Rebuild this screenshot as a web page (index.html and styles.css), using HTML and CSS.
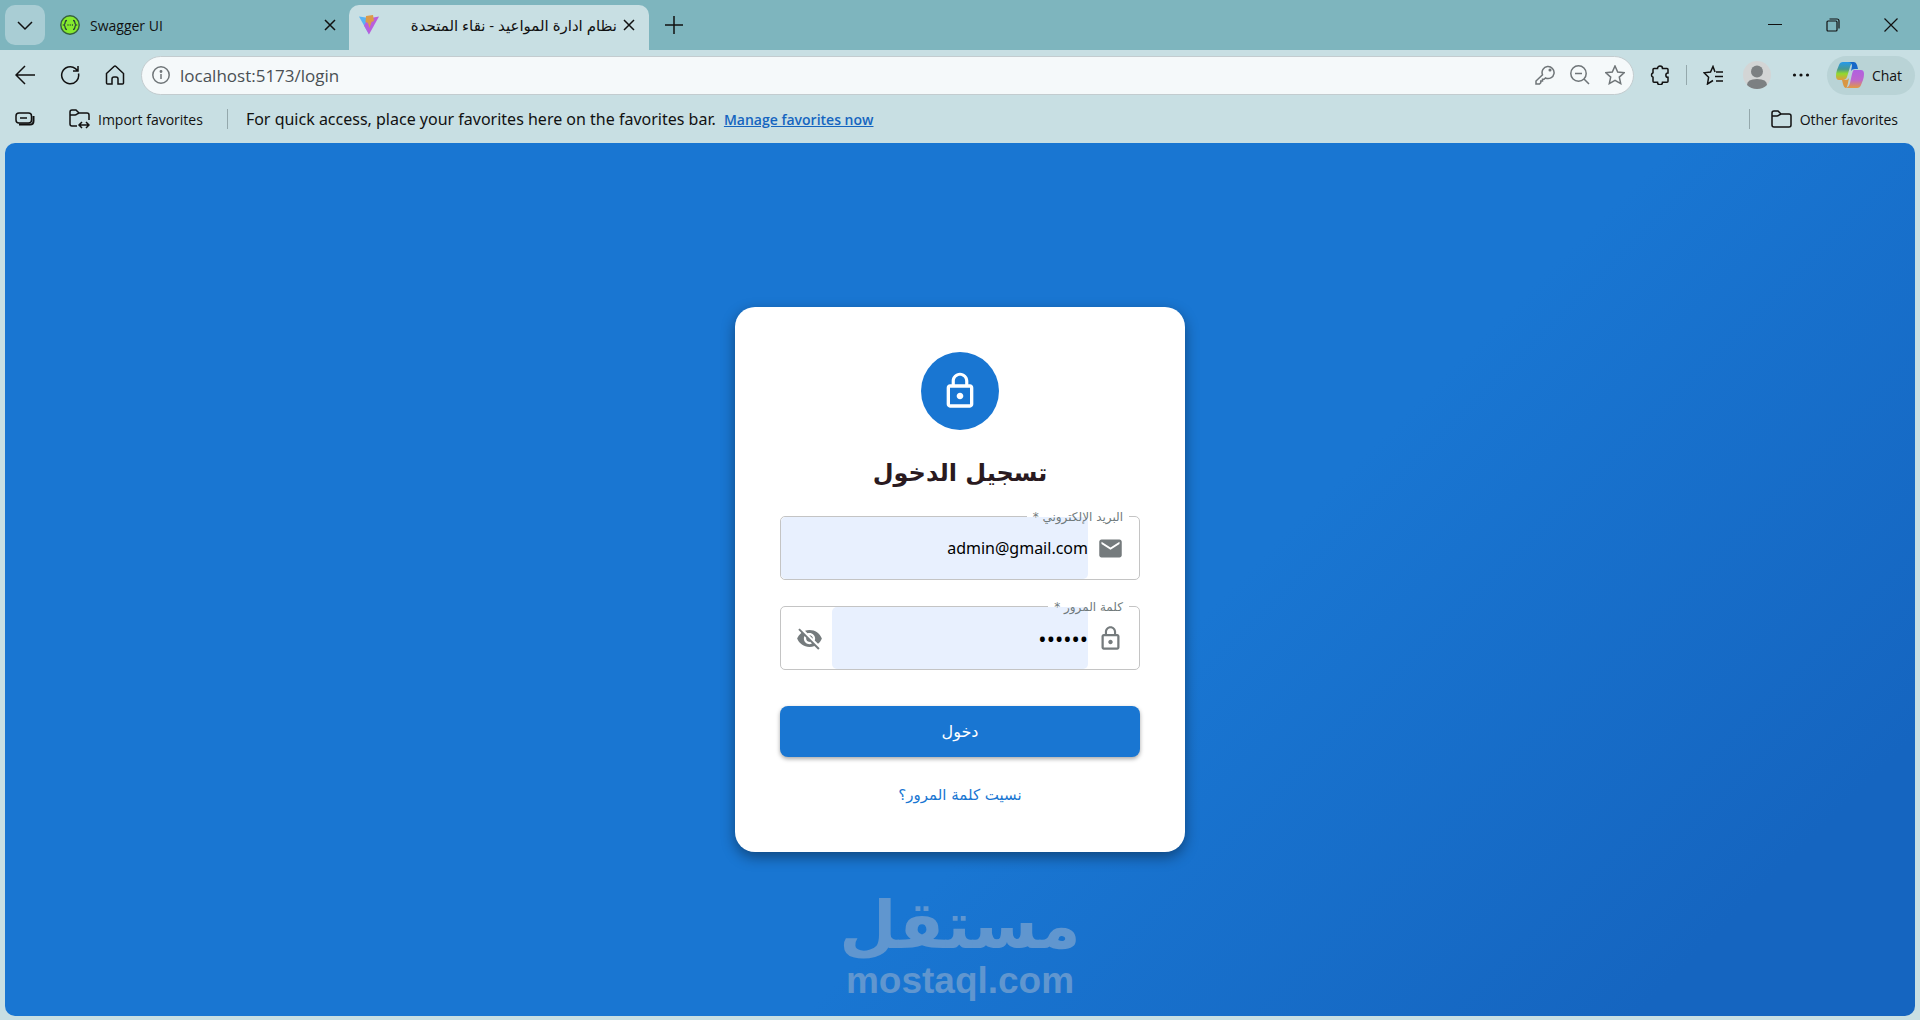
FILE: index.html
```html
<!DOCTYPE html>
<html lang="en">
<head>
  <meta charset="UTF-8" />
  <meta name="viewport" content="width=device-width, initial-scale=1.0"/>
  <title>نظام ادارة المواعيد - نقاء المتحدة</title>
  <link rel="stylesheet" href="styles.css">
</head>
<body>

<header>
  <div class="tab-strip">
    <button type="button" class="tab-menu" aria-label="Tab actions">
      <svg width="16" height="16" viewBox="0 0 16 16"><path d="M1 5l7 7 7-7"/></svg>
    </button>
    <div class="tab">
      <svg class="favicon" width="20" height="20" viewBox="0 0 20 20">
        <circle cx="10" cy="10" r="9.2" fill="#85ea2d" stroke="#35613c" stroke-width="1.4"/>
        <path d="M7 5.5c-1.5 0-1.8.6-1.8 1.8 0 1.5-.2 2.2-1.4 2.7 1.2.5 1.4 1.2 1.4 2.7 0 1.2.3 1.8 1.8 1.8M13 5.5c1.5 0 1.8.6 1.8 1.8 0 1.5.2 2.2 1.4 2.7-1.2.5-1.4 1.2-1.4 2.7 0 1.2-.3 1.8-1.8 1.8" stroke="#28423a" stroke-width="1.3"/>
        <path d="M7.5 10h1M9.7 10h1M11.9 10h1" stroke="#28423a"/>
      </svg>
      <span class="tab-title">Swagger UI</span>
      <button type="button" aria-label="Close tab"><svg width="12" height="12" viewBox="0 0 12 12"><path d="M1 1l10 10M11 1L1 11"/></svg></button>
    </div>
    <div class="tab active">
      <svg class="favicon" width="20" height="20" viewBox="0 0 20 20">
        <path d="M0 1.5l10 1.5v16.5z" fill="#58b4f4" stroke="none"/>
        <path d="M20 1.5L10 19.5 5 10.5l4-7z" fill="#b95fdc" stroke="none"/>
        <path d="M7 1l7-1 1 6-2.5 1-2 6-1.5-5-2.5-1z" fill="#dc9a48" stroke="none"/>
      </svg>
      <span class="tab-title" dir="rtl">نظام ادارة المواعيد - نقاء المتحدة</span>
      <button type="button" aria-label="Close tab"><svg width="12" height="12" viewBox="0 0 12 12"><path d="M1 1l10 10M11 1L1 11"/></svg></button>
    </div>
    <button type="button" class="new-tab" aria-label="New tab">
      <svg width="20" height="20" viewBox="0 0 20 20"><path d="M10 1v18M1 10h18"/></svg>
    </button>
    <div class="window-buttons">
      <button type="button" aria-label="Minimize"><svg width="14" height="14" viewBox="0 0 14 14"><path d="M0 6.5h14" stroke-width="1"/></svg></button>
      <button type="button" aria-label="Restore"><svg width="14" height="14" viewBox="0 0 14 14"><rect x="1" y="3" width="10" height="10" rx="1" stroke-width="1.2"/><path d="M3.5 1H11a2 2 0 0 1 2 2v7.5" stroke-width="1.2"/></svg></button>
      <button type="button" aria-label="Close"><svg width="14" height="14" viewBox="0 0 14 14"><path d="M.5.5l13 13M13.5.5l-13 13" stroke-width="1.2"/></svg></button>
    </div>
  </div>

  <nav class="toolbar">
    <div class="page-buttons">
      <button type="button" aria-label="Back"><svg width="20" height="20" viewBox="0 0 20 20"><path d="M20 10H1M10 1L1 10l9 9"/></svg></button>
      <button type="button" aria-label="Refresh"><svg width="20" height="20" viewBox="0 0 20 20"><path d="M18.5 8.5A8.5 8.5 0 1 1 15.5 3.6L18 6M18 1v5h-5"/></svg></button>
      <button type="button" aria-label="Home"><svg width="20" height="20" viewBox="0 0 20 20"><path d="M1.5 8.5L9 1.5q1-.9 2 0l7.5 7V18q0 1-1 1H13v-5q0-2-2-2H9q-2 0-2 2v5H2.5q-1 0-1-1z"/></svg></button>
    </div>
    <div class="address-bar">
      <svg width="18" height="18" viewBox="0 0 18 18"><circle cx="9" cy="9" r="8.2"/><path d="M9 8v5"/><circle cx="9" cy="5.5" r=".7" fill="#53585b"/></svg>
      <input type="text" value="localhost:5173/login" aria-label="Address">
      <svg width="20" height="20" viewBox="0 0 20 20"><path d="M7.5 9.8A6 6 0 1 1 10.5 13L9 14.3H7.5V16H5.8v1.7L4.5 19H1v-3z"/><circle cx="15" cy="5" r=".8" fill="#6f7578"/></svg>
      <svg width="20" height="20" viewBox="0 0 20 20"><circle cx="8.5" cy="8.5" r="7.7"/><path d="M5 8.5h7M14 14l5 5"/></svg>
      <svg width="20" height="20" viewBox="0 0 20 20"><path d="M10 1l2.7 6 6.5.7-4.9 4.4 1.4 6.5L10 15.4l-5.7 3.2 1.4-6.5L.8 7.7 7.3 7z"/></svg>
    </div>
    <button type="button" aria-label="Extensions"><svg width="20" height="20" viewBox="0 0 20 20"><path d="M4 3.5h3.5a2.5 2.5 0 0 1 5 0H17q1 0 1 1V8a2.1 2.1 0 1 0 0 4.3v4q0 1-1 1h-4.5a2.5 2.5 0 0 1-5 0H4q-1 0-1-1v-4a2.5 2.5 0 0 1 0-4.6V4.5q0-1 1-1z"/></svg></button>
    <span class="divider"></span>
    <button type="button" aria-label="Favorites"><svg width="20" height="20" viewBox="0 0 20 20"><path d="M12 7l-2-5.5L7.5 7 1 7.8l4.6 4.5L4.5 19 10 15.5M13 7h7M12 11.5h8M13 16h7"/></svg></button>
    <button type="button" class="profile" aria-label="Profile"><svg width="28" height="28" viewBox="0 0 28 28"><circle cx="14" cy="14" r="14" fill="#d3d5d5" stroke="none"/><circle cx="14" cy="10.5" r="6" fill="#7c8082" stroke="none"/><path d="M4 24q0-6 10-6t10 6q-4 4-10 4T4 24z" fill="#7c8082" stroke="none"/></svg></button>
    <button type="button" aria-label="Settings and more"><svg width="20" height="20" viewBox="0 0 20 20"><g fill="#111" stroke="none"><circle cx="3.5" cy="10" r="1.6"/><circle cx="10" cy="10" r="1.6"/><circle cx="16.5" cy="10" r="1.6"/></g></svg></button>
    <button type="button" class="chat">
      <svg width="28" height="28" viewBox="0 0 28 28">
        <defs>
          <linearGradient id="left" x2="0" y2="1"><stop stop-color="#2499ed"/><stop offset=".4" stop-color="#48988f"/><stop offset=".65" stop-color="#92da2e"/><stop offset="1" stop-color="#e39a40"/></linearGradient>
          <linearGradient id="right" x2="0" y2="1"><stop stop-color="#b060e0"/><stop offset=".55" stop-color="#bd66cf"/><stop offset="1" stop-color="#e39a40"/></linearGradient>
        </defs>
        <g stroke="none">
          <path d="M7 1h11q-3 1-4 5l-3 10q-1 3-4 3H3q-3 0-3-4 0-3 1-6l2-5q1-3 4-3z" fill="url(#left)"/>
          <path d="M12 1h6q2 0 3 3l1 4h-3q-3 0-4 2l1-5q0-4-4-4z" fill="#1767c8"/>
          <path d="M18 9h7q3 0 3 4 0 3-1 6l-2 5q-1 3-4 3H10q3-1 4-5l2-9q1-4 2-4z" fill="url(#right)"/>
          <path d="M6 19h4q2 0 3-2l-1 5q-1 5-2 5-2 0-3-4z" fill="#d99643"/>
        </g>
      </svg>
      Chat
    </button>
  </nav>

  <div class="favorites-bar">
    <button type="button" aria-label="Workspaces"><svg width="20" height="16" viewBox="0 0 20 16"><rect x="1" y="2" width="15.5" height="10" rx="3"/><path d="M5 7h7"/><path d="M4 13.6h11q3.5 0 3.5-3.6V5" stroke-width="2"/></svg></button>
    <button type="button" class="import">
      <svg width="21" height="20" viewBox="0 0 21 20"><path d="M8 17H3q-2 0-2-2V3q0-2 2-2h4l3 3h8q2 0 2 2v5M1 6h5q1 0 2-1l2-1M10.5 16h9M13 13l-3 3 3 3M17 13l3 3-3 3"/></svg>
      Import favorites
    </button>
    <span class="divider"></span>
    <p>For quick access, place your favorites here on the favorites bar. <a href="#">Manage favorites now</a></p>
    <span class="divider right"></span>
    <button type="button" class="other">
      <svg width="21" height="20" viewBox="0 0 21 20"><path d="M1 4q0-2 2-2h4l3 3h8q2 0 2 2v9q0 2-2 2H3q-2 0-2-2zM1 7h5q1 0 2-1l2-1"/></svg>
      Other favorites
    </button>
  </div>
</header>

<main dir="rtl" lang="ar">
  <form class="login-card">
    <div class="avatar">
      <svg width="40" height="40" viewBox="0 0 24 24"><path d="M12 17c1.1 0 2-.9 2-2s-.9-2-2-2-2 .9-2 2 .9 2 2 2zm6-9h-1V6c0-2.76-2.24-5-5-5S7 3.24 7 6v2H6c-1.1 0-2 .9-2 2v10c0 1.1.9 2 2 2h12c1.1 0 2-.9 2-2V10c0-1.1-.9-2-2-2zM8.9 6c0-1.71 1.39-3.1 3.1-3.1s3.1 1.39 3.1 3.1v2H8.9V6zM18 20H6V10h12v10z"/></svg>
    </div>
    <h1>تسجيل الدخول</h1>

    <fieldset class="field">
      <legend><label for="email">البريد الإلكتروني *</label></legend>
      <svg width="27" height="27" viewBox="0 0 24 24"><path d="M20 4H4c-1.1 0-2 .9-2 2v12c0 1.1.9 2 2 2h16c1.1 0 2-.9 2-2V6c0-1.1-.9-2-2-2zm0 4l-8 5-8-5V6l8 5 8-5v2z"/></svg>
      <input type="email" id="email" value="admin@gmail.com" required>
    </fieldset>

    <fieldset class="field">
      <legend><label for="password">كلمة المرور *</label></legend>
      <svg width="27" height="27" viewBox="0 0 24 24"><path d="M12 17c1.1 0 2-.9 2-2s-.9-2-2-2-2 .9-2 2 .9 2 2 2zm6-9h-1V6c0-2.76-2.24-5-5-5S7 3.24 7 6v2H6c-1.1 0-2 .9-2 2v10c0 1.1.9 2 2 2h12c1.1 0 2-.9 2-2V10c0-1.1-.9-2-2-2zM8.9 6c0-1.71 1.39-3.1 3.1-3.1s3.1 1.39 3.1 3.1v2H8.9V6zM18 20H6V10h12v10z"/></svg>
      <input type="password" id="password" value="123456" required>
      <button type="button" class="toggle" aria-label="إظهار كلمة المرور">
        <svg width="27" height="27" viewBox="0 0 24 24"><path d="M12 7c2.76 0 5 2.24 5 5 0 .65-.13 1.26-.36 1.83l2.92 2.92c1.51-1.26 2.7-2.89 3.43-4.75-1.73-4.39-6-7.5-11-7.5-1.4 0-2.74.25-3.98.7l2.16 2.16C10.74 7.13 11.35 7 12 7zM2 4.27l2.28 2.28.46.46C3.08 8.3 1.78 10.02 1 12c1.73 4.39 6 7.5 11 7.5 1.55 0 3.03-.3 4.38-.84l.42.42L19.73 22 21 20.73 3.27 3 2 4.27zM7.53 9.8l1.55 1.55c-.05.21-.08.43-.08.65 0 1.66 1.34 3 3 3 .22 0 .44-.03.65-.08l1.55 1.55c-.67.33-1.41.53-2.2.53-2.76 0-5-2.24-5-5 0-.79.2-1.53.53-2.2zm4.31-.78l3.15 3.15.02-.16c0-1.66-1.34-3-3-3l-.17.01z"/></svg>
      </button>
    </fieldset>

    <button type="submit" class="submit">دخول</button>
    <a href="#" class="forgot">نسيت كلمة المرور؟</a>
  </form>

  <div class="watermark">
    <strong>مستقل</strong>
    <span dir="ltr">mostaql.com</span>
  </div>
</main>

</body>
</html>
```

FILE: styles.css
```css
* {
  box-sizing: border-box;
}

body {
  margin: 0;
  min-height: 100vh;
  display: flex;
  flex-direction: column;
  background-color: #c8dfe3;
  font-family: "Open Sans", "Noto Sans", "DejaVu Sans", sans-serif;
  font-size: 14px;
  color: #111;
}

button {
  display: flex;
  align-items: center;
  justify-content: center;
  padding: 0;
  border: none;
  background: none;
  font: inherit;
  color: inherit;
  cursor: pointer;
}

input {
  width: 0;
  flex: 1;
  border: none;
  outline: none;
  background: none;
}

svg {
  display: block;
  flex-shrink: 0;
}

header svg {
  fill: none;
  stroke: #111;
  stroke-width: 1.5;
}

/* Tabs */
.tab-strip {
  display: flex;
  align-items: center;
  height: 50px;
  padding: 0 5px;
  background-color: #7eb5be;
}

.tab-menu {
  width: 40px;
  height: 40px;
  border-radius: 10px;
  background-color: #a9cdd4;
}

.tab {
  display: flex;
  align-items: center;
  align-self: flex-end;
  gap: 10px;
  width: 304px;
  height: 45px;
  padding: 0 13px 5px 15px;
}

.tab-title {
  flex: 1;
  white-space: nowrap;
}

.active {
  gap: 6px;
  width: 300px;
  padding: 0 14px 5px 10px;
  border-radius: 10px 10px 0 0;
  background-color: #c8dfe3;
  font-size: 15px;
}

.new-tab {
  margin-left: 15px;
}

.window-buttons {
  display: flex;
  gap: 44px;
  margin-left: auto;
  padding-right: 17px;
}

/* Toolbar */
.toolbar {
  display: flex;
  align-items: center;
  height: 50px;
  padding: 0 5px 0 15px;
  gap: 16px;
}

.page-buttons {
  display: flex;
  gap: 25px;
}

.address-bar {
  flex: 1;
  display: flex;
  align-items: center;
  gap: 10px;
  height: 39px;
  padding: 0 8px 0 10px;
  border: 1px solid #c3cccf;
  border-radius: 20px;
  background-color: #f5f9fa;
}

.address-bar svg {
  stroke: #6f7578;
}

.address-bar input {
  padding: 0;
  font: inherit;
  font-size: 17px;
  color: #4a5054;
}

.address-bar input ~ svg {
  margin-left: 5px;
}

.profile {
  margin: 0 4px;
}

.divider {
  width: 1px;
  height: 20px;
  background-color: #94a8ac;
}

.chat {
  gap: 8px;
  width: 88px;
  height: 39px;
  padding-right: 4px;
  border-radius: 20px;
  background-color: #b9d3d6;
}

/* Favorites */
.favorites-bar {
  display: flex;
  align-items: center;
  height: 43px;
  padding: 0 22px 5px 15px;
}

.favorites-bar p {
  margin: 0 0 0 18px;
  font-family: "Noto Sans", sans-serif;
  font-size: 16px;
}

.favorites-bar a {
  margin-left: 4px;
  color: #1565c0;
  font-family: "Open Sans", sans-serif;
  font-size: 14px;
  font-weight: 600;
}

.import {
  gap: 8px;
  margin: 0 24px 0 34px;
}

.right {
  margin: 0 21px 0 auto;
}

.other {
  gap: 8px;
}

/* Login page */
main {
  position: relative;
  flex: 1;
  display: flex;
  align-items: center;
  justify-content: center;
  margin: 0 5px 4px;
  border-radius: 10px;
  background: linear-gradient(135deg, #1976d2 60%, #1565c0 90%);
  font-family: "DejaVu Sans", sans-serif;
}

.login-card {
  display: flex;
  flex-direction: column;
  align-items: center;
  width: 450px;
  padding: 45px;
  border-radius: 20px;
  background-color: #fff;
  box-shadow: 0 5px 14px rgba(0, 0, 0, 0.4);
}

.avatar {
  display: flex;
  align-items: center;
  justify-content: center;
  width: 78px;
  height: 78px;
  border-radius: 50%;
  background-color: #1976d2;
}

.avatar svg {
  fill: #fff;
}

h1 {
  margin: 23px 0;
  font-size: 24px;
  line-height: 40px;
  color: #2a1a20;
}

.field {
  display: flex;
  align-items: center;
  width: 100%;
  min-width: 0;
  height: 64px;
  margin: 0 0 26px;
  padding: 0;
  border: 1px solid #c4c4c4;
  border-radius: 5px;
}

.field legend {
  position: relative;
  z-index: 1;
  height: 1px;
  padding: 0 6px;
  margin-right: 10px;
  line-height: 1px;
}

.field label {
  font-size: 12px;
  color: #6f7a7c;
}

.field svg {
  margin-right: 15px;
  fill: #757b7d;
}

.field input {
  height: 62px;
  margin-right: 9px;
  padding: 0;
  border-radius: 5px;
  background-color: #e8f0fe;
  font-family: "Noto Sans", sans-serif;
  font-size: 16px;
  text-align: right;
}

.field input[type="password"] {
  font-size: 22px;
}

.toggle {
  width: 51px;
  padding-left: 6px;
}

.toggle svg {
  margin: 0;
}

.submit {
  width: 100%;
  height: 51px;
  margin-top: 10px;
  border-radius: 8px;
  background-color: #1976d2;
  box-shadow: 0 2px 4px rgba(0, 0, 0, 0.35);
  color: #fff;
  font-size: 16px;
}

.forgot {
  margin-top: 26px;
  line-height: 24px;
  font-size: 15px;
  color: #1976d2;
  text-decoration: none;
}

.watermark {
  position: absolute;
  bottom: 14px;
  left: 50%;
  transform: translateX(-50%);
  display: flex;
  flex-direction: column;
  align-items: center;
  color: #6096cf;
}

.watermark strong {
  font-size: 66px;
  line-height: 66px;
}

.watermark span {
  font-family: "Liberation Sans", sans-serif;
  font-size: 37px;
  font-weight: bold;
  line-height: 43px;
}
```
